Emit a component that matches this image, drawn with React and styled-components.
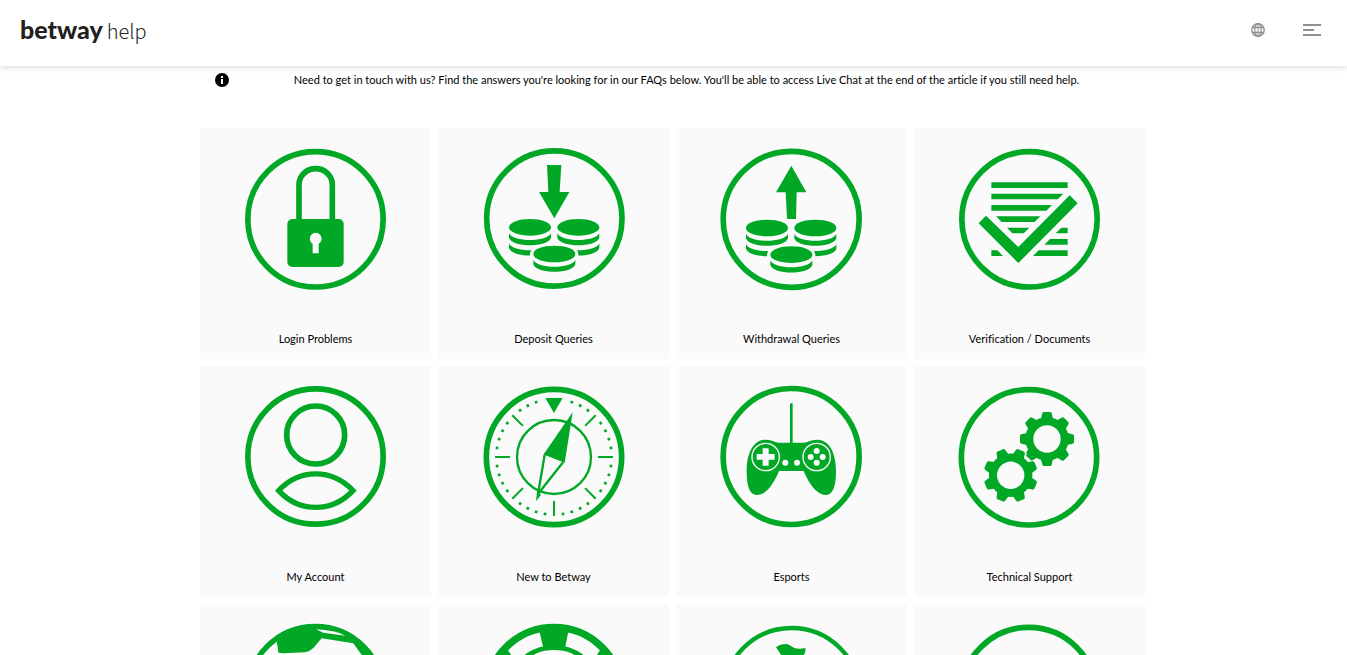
import React from 'react';
import styled, { createGlobalStyle } from 'styled-components';

const GREEN = '#00a826';
const TILE = '#fafafa';

const GlobalStyle = createGlobalStyle`
	* {
		box-sizing: border-box;
	}
	body {
		margin: 0;
		background: #fff;
		color: #000;
		font-family: Lato, 'Open Sans', sans-serif;
		font-size: 11px;
		font-variant-ligatures: none;
		line-height: 16px;
	}
`;

const Header = styled.header`
	position: sticky;
	top: 0;
	z-index: 1;
	display: flex;
	align-items: center;
	justify-content: space-between;
	height: 66px;
	padding: 0 26px 6px 20px;
	background: #fff;
	box-shadow: 0 0 8px rgba(0, 0, 0, 0.2);
`;

const Logo = styled.a`
	display: flex;
	align-items: baseline;
	gap: 4px;
	color: #231f20;
	font-size: 25px;
	line-height: 30px;
	text-decoration: none;
`;

const Brand = styled.span`
	font-weight: 900;
`;

const Product = styled.span`
	font-family: 'Noto Sans CJK SC', sans-serif;
	font-size: 20px;
	font-weight: 300;
`;

const Actions = styled.div`
	display: flex;
	align-items: center;
	gap: 38px;
`;

const IconButton = styled.button`
	display: flex;
	padding: 0;
	border: 0;
	background: none;
	color: #8f8f95;
	cursor: pointer;
`;

const Main = styled.main`
	width: 100%;
	max-width: 947px;
	margin: 0 auto;
	padding-right: 2px;
`;

const Notice = styled.div`
	display: grid;
	grid-template-columns: 44px 1fr;
	align-items: center;
	padding: 6px 16px 40px 0;
	text-align: center;
`;

const NoticeIcon = styled.svg`
	justify-self: center;
`;

const NoticeText = styled.p`
	margin: 0;
`;

const Grid = styled.nav`
	display: grid;
	grid-template-columns: repeat(4, 1fr);
	gap: 7px;
`;

const Tile = styled.a`
	display: flex;
	flex-direction: column;
	align-items: center;
	justify-content: space-between;
	height: 231px;
	padding: 12px 0;
	background: ${TILE};
	color: #000;
	text-decoration: none;
`;

const TileIcon = styled.svg`
	width: 161px;
	height: 161px;
	fill: ${GREEN};
	stroke: none;
`;

const Ring = ({ cx = 240, cy = 237, r = 203, width = 17 }) => (
	<circle cx={cx} cy={cy} r={r} fill="none" stroke={GREEN} strokeWidth={width} />
);

const Lock = () => (
	<>
		<Ring cx={238.5} cy={238} />
		<path d="M189 245V134a50 48 0 0 1 100 0V245" fill="none" stroke={GREEN} strokeWidth="17" />
		<rect x="154" y="237" width="169" height="144" rx="15" />
		<path d="M230 340v-28a18 18 0 1 1 18 0v28z" fill={TILE} />
	</>
);

const Stack = ({ x, y, coins }) => (
	<>
		<ellipse cx={x} cy={y} rx="63" ry="25" />
		{Array.from({ length: coins }, (_, i) => (
			<path
				key={i}
				d={`M${x - 63} ${y + 17 + i * 31}c10 28 116 28 126 0v14c-8 30 -118 30 -126 0z`}
			/>
		))}
	</>
);

const Coins = ({ y }) => (
	<>
		<Stack x={168} y={y} coins={2} />
		<Stack x={313} y={y} coins={2} />
		<path d={`M168 ${y + 80}a72 34 0 0 1 145 0v60h-145z`} fill={TILE} />
		<Stack x={241} y={y + 80} coins={1} />
	</>
);

const Deposit = () => (
	<>
		<Ring cx={241} cy={235.5} />
		<Coins y={262} />
		<path d="M219 75h43l-5 81h29l-45 79l-46 -79h28z" />
	</>
);

const Withdrawal = () => (
	<>
		<Ring cx={240.5} cy={238} r={204} />
		<Coins y={264} />
		<path d="M241 77l45 80h-29l-2 80h-27l-4 -80h-29z" />
	</>
);

const Documents = () => (
	<>
		<Ring cx={241.5} cy={238} />
		<path d="M127 127h229v17h-229zM127 161h216l-17 17H127zM127 195h182l-17 17H127zM141 229h133l-17 17H158zM174 263h67l-17 17H190zM337 263h19v17h-36zM303 297h53v17h-70zM269 331h87v17h-104zM127 331h18l17 17h-35z" />
		<path d="M89 250l22 -23l97 94L362 166l24 24L208 369z" />
	</>
);

const Account = () => (
	<>
		<Ring cx={238.5} cy={235.5} />
		<Ring cx={239} cy={171} r={87} />
		<path
			d="M128 338C190 271 288 271 351 338C288 405 190 405 128 338z"
			fill="none"
			stroke={GREEN}
			strokeWidth="16"
		/>
	</>
);

const Compass = () => {
	const ticks = [45, 90, 135, 180, 225, 270, 315];
	const dots = Array.from({ length: 40 }, (_, i) => i * 9).filter(
		(a) => a % 45 !== 0 && a !== 9 && a !== 351
	);

	return (
		<>
			<Ring />
			<Ring r={111} width={7} />
			{ticks.map((a) => (
				<rect key={a} x="237" y="60" width="6" height="45" transform={`rotate(${a} 240 237)`} />
			))}
			{dots.map((a) => (
				<rect key={a} x="236" y="60" width="8" height="8" transform={`rotate(${a} 240 237)`} />
			))}
			<path d="M214 60h52l-26 45z" />
			<path d="M296 103L208 230L272 255z" />
			<path d="M212 231L192 348L267 253" fill={TILE} stroke={GREEN} strokeWidth="7" />
			<path d="M186 370l3 -28l12 8z" />
		</>
	);
};

const Gamepad = () => (
	<>
		<Ring cx={240.5} cy={235.5} r={204} />
		<rect x="237" y="76" width="8" height="125" />
		<path d="M165 185C185 185 192 194 204 194H278C290 194 298 185 318 185C350 185 375 215 375 282C375 330 363 351 344 351C318 351 294 318 278 279H204C188 318 165 351 139 351C118 351 107 330 107 282C107 215 133 185 165 185z" />
		<g fill="none" stroke={TILE} strokeWidth="4">
			<circle cx="164" cy="237" r="41" />
			<circle cx="317" cy="237" r="41" />
		</g>
		<g fill={TILE}>
			<path d="M155 211h18v17h18v17h-18v18h-18v-18h-18v-17h18z" />
			<circle cx="317" cy="219" r="9" />
			<circle cx="317" cy="254" r="9" />
			<circle cx="299" cy="237" r="9" />
			<circle cx="335" cy="237" r="9" />
			<circle cx="223" cy="254" r="9" />
			<circle cx="258" cy="254" r="9" />
		</g>
	</>
);

const Gear = ({ x, y, turn = 0 }) => (
	<g transform={`translate(${x} ${y}) rotate(${turn})`}>
		{[0, 45, 90, 135, 180, 225, 270, 315].map((a) => (
			<path
				key={a}
				d="M-19 -57L-14 -77Q-13 -81 -9 -81H9Q13 -81 14 -77L19 -57z"
				transform={`rotate(${a})`}
			/>
		))}
		<circle r="53" fill="none" stroke={GREEN} strokeWidth="24" />
	</g>
);

const Gears = () => (
	<>
		<Ring cy={238} />
		<Gear x={185} y={292} turn={22.5} />
		<Gear x={294} y={183} />
		<path d="M232 236l14 14M232 226l-4 12" fill="none" stroke={TILE} strokeWidth="4" />
	</>
);

const Football = () => (
	<>
		<Ring cx={238} cy={236} r={204} />
		<path d="M60 146L122 77L127 110L142 112L207 109Q222 106 232 96L257 67L352 82L377 117L420 160A204 204 0 0 0 238 24A204 204 0 0 0 60 146z" />
		<path d="M122 77L127 110L100 150L55 160Q78 110 122 77z" fill={TILE} />
		<path d="M240 40Q295 42 328 59L262 50z" fill={TILE} />
	</>
);

const Chip = () => (
	<>
		<Ring r={203} width={22} />
		<path d="M194 36h91l-12 60h-65z" />
		<path d="M60 120l40 -20l30 44l-40 40zM420 120l-40 -20l-30 44l40 40z" />
		<Ring r={142} width={14} />
	</>
);

const Golf = () => (
	<>
		<Ring cx={242} cy={241} r={205} width={13} />
		<path d="M195 94Q208 84 225 84C246 86 240 104 283 96Q288 110 268 128V330H214V122z" />
	</>
);

const Blank = () => <Ring cx={239} />;

// box is the left edge of the drawing, it keeps the ring centred in its tile
const topics = [
	{ label: 'Login Problems', icon: Lock, box: -3 },
	{ label: 'Deposit Queries', icon: Deposit, box: -3 },
	{ label: 'Withdrawal Queries', icon: Withdrawal, box: 0 },
	{ label: 'Verification / Documents', icon: Documents, box: 0 },
	{ label: 'My Account', icon: Account, box: -3 },
	{ label: 'New to Betway', icon: Compass, box: -3 },
	{ label: 'Esports', icon: Gamepad, box: 0 },
	{ label: 'Technical Support', icon: Gears, box: 0 },
	{ name: 'Sports', icon: Football, box: -3 },
	{ name: 'Casino', icon: Chip, box: -3 },
	{ name: 'Golf', icon: Golf, box: 0 },
	{ name: 'More', icon: Blank, box: 0 },
];

export default function App() {
	return (
		<>
			<GlobalStyle />
			<Header>
				<Logo href="#">
					<Brand>betway</Brand>
					<Product>help</Product>
				</Logo>
				<Actions>
					<IconButton type="button" aria-label="Language">
						<svg width="14" height="14" viewBox="0 0 14 14" fill="none" stroke="currentColor">
							<circle cx="7" cy="7" r="6.2" strokeWidth="1.4" />
							<ellipse cx="7" cy="7" rx="3.2" ry="6.3" strokeWidth="1.2" />
							<path d="M7 1v12" />
							<path d="M1 4.5h12M1 9.5h12" strokeWidth="1.6" />
						</svg>
					</IconButton>
					<IconButton type="button" aria-label="Menu">
						<svg width="18" height="12" viewBox="0 0 18 12" fill="currentColor">
							<path d="M0 0h18v2H0zM0 5h11v2H0zM0 10h18v2H0z" />
						</svg>
					</IconButton>
				</Actions>
			</Header>
			<Main>
				<Notice>
					<NoticeIcon width="14" height="14" viewBox="0 0 14 14" aria-hidden="true">
						<circle cx="7" cy="7" r="7" />
						<path d="M6 3h2v2H6zM6 6h2v5H6z" fill="#fff" />
					</NoticeIcon>
					<NoticeText>
						Need to get in touch with us? Find the answers you're looking for in our FAQs below. You'll
						be able to access Live Chat at the end of the article if you still need help.
					</NoticeText>
				</Notice>
				<Grid>
					{topics.map(({ label, name, icon: Icon, box }) => (
						<Tile href="#" key={label || name} aria-label={name}>
							<TileIcon viewBox={`${box} 0 483 483`} aria-hidden="true">
								<Icon />
							</TileIcon>
							{label && <span>{label}</span>}
						</Tile>
					))}
				</Grid>
			</Main>
		</>
	);
}
